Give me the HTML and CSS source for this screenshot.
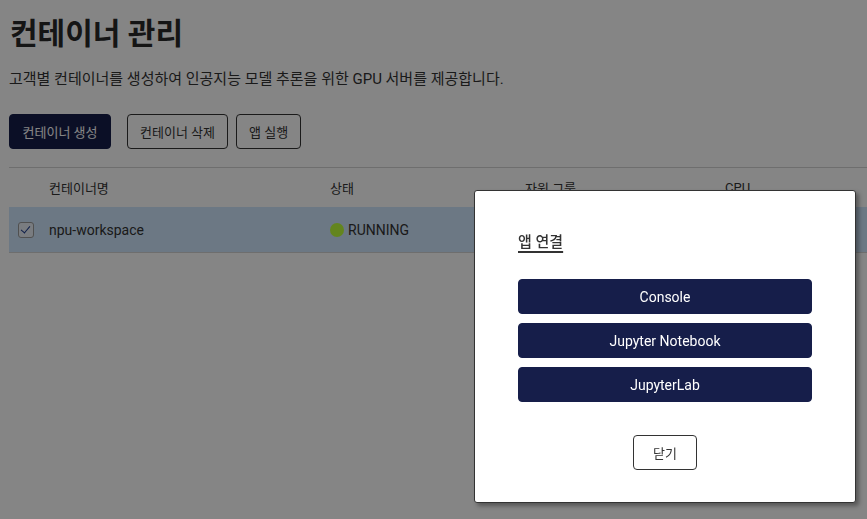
FILE: index.html
```html
<!DOCTYPE html>
<html lang="ko">
<head>
    <meta charset="UTF-8">
    <meta name="viewport" content="width=device-width, initial-scale=1.0">
    <title>컨테이너 관리</title>
    <link rel="stylesheet" href="styles.css">
</head>
<body>

    <div class="page">
        <h1 class="page-title">컨테이너 관리</h1>
        <p class="page-desc">고객별 컨테이너를 생성하여 인공지능 모델 추론을 위한 GPU 서버를 제공합니다.</p>

        <!-- toolbar start -->
        <div class="toolbar">
            <button class="btn btn-primary btn-create">컨테이너 생성</button>
            <button class="btn btn-outline">컨테이너 삭제</button>
            <button class="btn btn-outline">앱 실행</button>
        </div>
        <!-- toolbar end -->

        <table class="container-table">
            <thead>
                <tr>
                    <th class="col-check"></th>
                    <th class="col-name">컨테이너명</th>
                    <th class="col-status">상태</th>
                    <th class="col-group">자원 그룹</th>
                    <th class="col-cpu">CPU</th>
                    <th></th>
                </tr>
            </thead>
            <tbody>
                <tr class="selected">
                    <td class="col-check"><span class="checkbox checked"></span></td>
                    <td>npu-workspace</td>
                    <td><span class="status-dot"></span>RUNNING</td>
                    <td></td>
                    <td></td>
                    <td></td>
                </tr>
            </tbody>
        </table>
    </div>

    <div class="overlay"></div>

    <!-- app connect modal start -->
    <div class="modal">
        <h2 class="modal-title">앱 연결</h2>
        <div class="app-list">
            <button class="btn btn-primary btn-app">Console</button>
            <button class="btn btn-primary btn-app">Jupyter Notebook</button>
            <button class="btn btn-primary btn-app">JupyterLab</button>
        </div>
        <div class="modal-footer">
            <button class="btn btn-outline btn-close">닫기</button>
        </div>
    </div>
    <!-- app connect modal end -->

</body>
</html>
```

FILE: styles.css
```css
body {
    margin: 0;
    padding: 0;
    font-family: Roboto, "Noto Sans CJK KR", sans-serif;
    color: #333;
    background: #fff;
    overflow: hidden;
}

.page {
    padding: 0 9px;
    width: 1100px;
}

.page-title {
    font-size: 30px;
    font-weight: 700;
    line-height: 40px;
    margin: 14px 0 0 1px;
    color: #2a2a2a;
}

.page-desc {
    font-size: 15px;
    line-height: 20px;
    margin: 15px 0 0;
}

.toolbar {
    display: flex;
    gap: 8px;
    margin-top: 25px;
}

.btn {
    font-family: Roboto, "Noto Sans CJK KR", sans-serif;
    font-size: 13px;
    height: 35px;
    border-radius: 4px;
    cursor: pointer;
}

.btn-primary {
    background-color: #161e4a;
    border: 1px solid #161e4a;
    color: #fff;
}

.btn-outline {
    background-color: #fff;
    border: 1px solid #333;
    color: #333;
    padding: 0 12px;
}

.btn-create {
    width: 102px;
    margin-right: 8px;
}

/* table */

.container-table {
    width: 100%;
    margin-top: 18px;
    border-collapse: collapse;
    border-top: 1px solid #d4d4d4;
    border-bottom: 1px solid #d4d4d4;
    font-size: 14px;
}

.container-table th {
    height: 39px;
    text-align: left;
    font-weight: 400;
    font-size: 13px;
    padding: 0;
}

.container-table td {
    height: 45px;
    padding: 0;
}

.container-table .col-check {
    width: 31px;
    padding-left: 9px;
    text-align: left;
}

.col-name { width: 281px; }
.col-status { width: 195px; }
.col-group { width: 200px; }
.col-cpu { width: 200px; }

.container-table tr.selected {
    background-color: #cfe6fd;
}

.checkbox {
    display: inline-block;
    width: 14px;
    height: 14px;
    border: 1px solid #999;
    border-radius: 3px;
    background: #e8eef6;
    vertical-align: middle;
    position: relative;
}

.checkbox.checked::after {
    content: "";
    position: absolute;
    left: 4px;
    top: 1px;
    width: 4px;
    height: 8px;
    border-right: 1.5px solid #1c3b8c;
    border-bottom: 1.5px solid #1c3b8c;
    transform: rotate(40deg);
}

.status-dot {
    display: inline-block;
    width: 14px;
    height: 14px;
    border-radius: 50%;
    background-color: #bfff3a;
    margin-right: 4px;
    vertical-align: -2px;
}

/* modal */

.overlay {
    position: fixed;
    inset: 0;
    background-color: rgba(0, 0, 0, 0.48);
}

.modal {
    position: absolute;
    left: 474px;
    top: 190px;
    width: 294px;
    padding: 40px 43px 32px;
    background: #fff;
    border: 1px solid #333;
    border-radius: 3px;
    box-shadow: 3px 3px 4px rgba(0, 0, 0, 0.35);
}

.modal-title {
    display: inline-block;
    font-size: 15px;
    font-weight: 500;
    margin: 0;
    line-height: 22px;
    color: #333;
    text-decoration: underline;
    text-decoration-thickness: 2px;
    text-underline-offset: 4px;
}

.app-list {
    display: flex;
    flex-direction: column;
    gap: 9px;
    margin-top: 26px;
}

.btn-app {
    width: 100%;
    font-size: 14px;
}

.modal-footer {
    display: flex;
    justify-content: center;
    margin-top: 33px;
}

.btn-close {
    width: 64px;
    font-size: 13px;
}
```
